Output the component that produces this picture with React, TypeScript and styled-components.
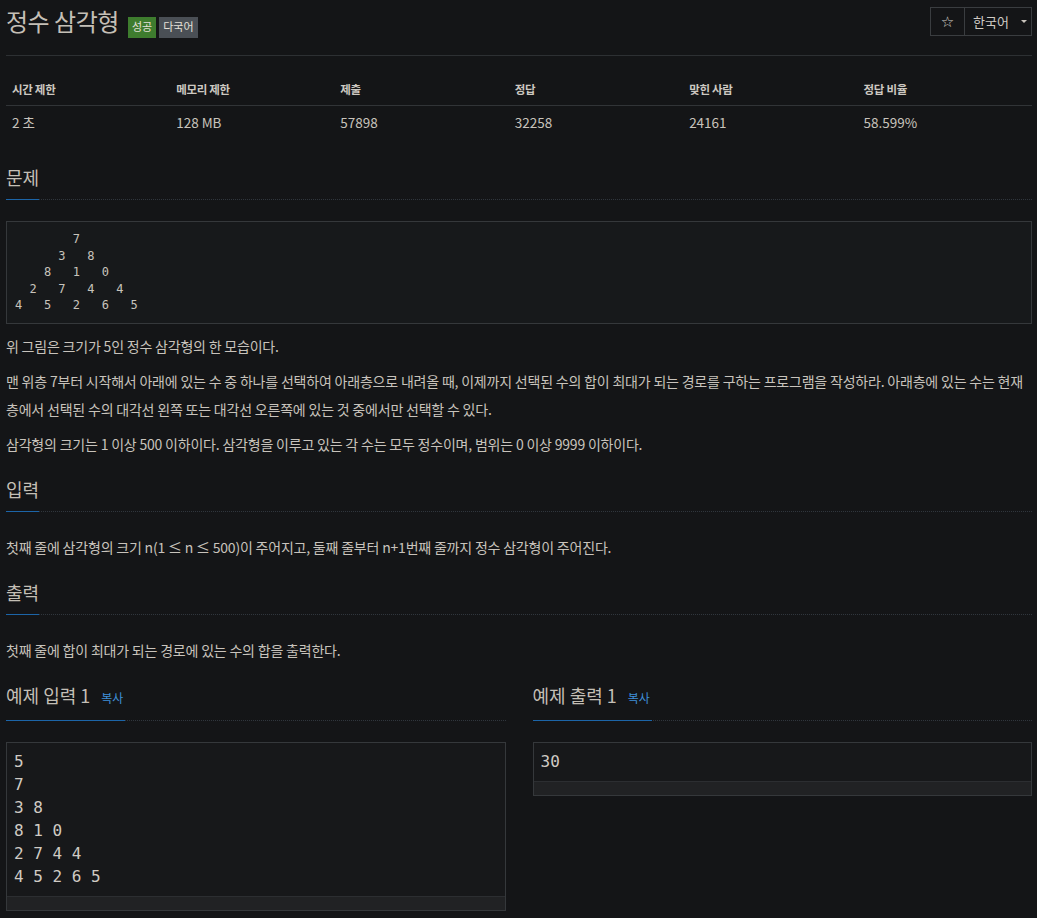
import React from "react";
import styled, { createGlobalStyle } from "styled-components";

const GlobalStyle = createGlobalStyle`
  html, body { margin: 0; padding: 0; background: #141517; }
  body {
    font-family: "Noto Sans CJK KR", "Noto Sans", sans-serif;
    color: #c8c3bc;
    word-break: keep-all;
  }
  * { box-sizing: border-box; }
`;

const Page = styled.div`
  padding: 0 5px 0 6px;
  min-height: 918px;
`;

const Header = styled.header`
  display: flex;
  justify-content: space-between;
  align-items: flex-start;
  height: 56px;
  border-bottom: 1px solid #2d3033;
`;

const TitleRow = styled.div`
  display: flex;
  align-items: baseline;
  margin-top: 6px;
`;

const Title = styled.h1`
  margin: 0 9px 0 0;
  font-size: 24px;
  font-weight: 400;
  line-height: 30px;
  letter-spacing: -0.02em;
  color: #c4bfb6;
`;

const Badge = styled.span<{ $tone: "success" | "muted" }>`
  display: inline-block;
  font-size: 11px;
  line-height: 19px;
  padding: 0 4px 2px;
  margin-right: 3px;
  color: #e4e0d9;
  background: ${(p) => (p.$tone === "success" ? "#3e7c2e" : "#4a4f55")};
`;

const ButtonGroup = styled.div`
  display: flex;
  height: 29px;
  margin-top: 7px;
  border: 1px solid #3a3d40;
`;

const StarButton = styled.div`
  width: 34px;
  display: flex;
  align-items: center;
  justify-content: center;
  border-right: 1px solid #3a3d40;
  font-family: "DejaVu Sans", sans-serif;
  font-size: 15px;
  color: #d6d2cb;
`;

const LangButton = styled.div`
  width: 66px;
  display: flex;
  align-items: center;
  padding-left: 8px;
  font-size: 13px;
  color: #d0cbc4;
`;

const Caret = styled.span`
  margin-left: 12px;
  width: 0;
  height: 0;
  border-top: 3px solid #c8c3bc;
  border-left: 3px solid transparent;
  border-right: 3px solid transparent;
`;

const InfoTable = styled.table`
  width: 100%;
  margin: 17px 0 28px;
  border-collapse: collapse;
  table-layout: fixed;
`;

const Th = styled.th`
  text-align: left;
  padding: 6px 6px;
  font-size: 11.5px;
  font-weight: 700;
  line-height: 20px;
  letter-spacing: -0.3px;
  color: #cdc8c1;
  border-bottom: 1px solid #313437;
`;

const Td = styled.td`
  padding: 6px 6px;
  font-size: 13.5px;
  line-height: 20px;
  color: #c8c3bc;
`;

const Section = styled.section`
  margin-bottom: 19.5px;
`;

const Headline = styled.div`
  display: flex;
  margin-bottom: 21px;
  border-bottom: 1px dotted #30363d;
`;

const H2 = styled.h2`
  margin: 0 0 -1px;
  padding-bottom: 11px;
  font-size: 18px;
  font-weight: 400;
  line-height: 22px;
  color: #c4bfb6;
  border-bottom: 1px solid #1c65a8;
`;

const CopyLink = styled.span`
  margin-left: 11px;
  padding-right: 2px;
  font-size: 12px;
  color: #3f8fd8;
`;

const FigurePre = styled.pre`
  margin: 0 0 8px;
  padding: 9px 8px;
  background: #17191b;
  border: 1px solid #35383b;
  font-family: "DejaVu Sans Mono", monospace;
  font-size: 12px;
  line-height: 16.6px;
  color: #c8c3bc;
`;

const Para = styled.p`
  margin: 0 0 6.6px;
  font-size: 14px;
  line-height: 28.4px;
  letter-spacing: -0.2px;
`;

const Samples = styled.div`
  display: grid;
  grid-template-columns: 1fr 1fr;
  column-gap: 27px;
`;

const SampleBox = styled.div`
  border: 1px solid #35383b;
  background: #17181a;
`;

const SamplePre = styled.pre`
  margin: 0;
  padding: 7px 7px 8px;
  font-family: "DejaVu Sans Mono", monospace;
  font-size: 16px;
  line-height: 23px;
  color: #d0cbc4;
`;

const ScrollTrack = styled.div`
  height: 14px;
  background: #212224;
  border-top: 1px solid #2c2e31;
`;

const stats = [
  { label: "시간 제한", value: "2 초", w: "16%" },
  { label: "메모리 제한", value: "128 MB", w: "16%" },
  { label: "제출", value: "57898", w: "17%" },
  { label: "정답", value: "32258", w: "17%" },
  { label: "맞힌 사람", value: "24161", w: "17%" },
  { label: "정답 비율", value: "58.599%", w: "17%" },
];

const triangle = `        7
      3   8
    8   1   0
  2   7   4   4
4   5   2   6   5`;

const sampleIn = `5
7
3 8
8 1 0
2 7 4 4
4 5 2 6 5`;

export default function App() {
  return (
    <>
      <GlobalStyle />
      <Page>
        <Header>
          <TitleRow>
            <Title>정수 삼각형</Title>
            <Badge $tone="success">성공</Badge>
            <Badge $tone="muted">다국어</Badge>
          </TitleRow>
          <ButtonGroup>
            <StarButton>☆</StarButton>
            <LangButton>
              한국어
              <Caret />
            </LangButton>
          </ButtonGroup>
        </Header>

        <InfoTable>
          <colgroup>
            {stats.map((s) => (
              <col key={s.label} style={{ width: s.w }} />
            ))}
          </colgroup>
          <thead>
            <tr>
              {stats.map((s) => (
                <Th key={s.label}>{s.label}</Th>
              ))}
            </tr>
          </thead>
          <tbody>
            <tr>
              {stats.map((s) => (
                <Td key={s.label}>{s.value}</Td>
              ))}
            </tr>
          </tbody>
        </InfoTable>

        <Section>
          <Headline>
            <H2>문제</H2>
          </Headline>
          <FigurePre>{triangle}</FigurePre>
          <Para>위 그림은 크기가 5인 정수 삼각형의 한 모습이다.</Para>
          <Para>
            맨 위층 7부터 시작해서 아래에 있는 수 중 하나를 선택하여 아래층으로 내려올 때, 이제까지 선택된 수의 합이
            최대가 되는 경로를 구하는 프로그램을 작성하라. 아래층에 있는 수는 현재 층에서 선택된 수의 대각선 왼쪽 또는
            대각선 오른쪽에 있는 것 중에서만 선택할 수 있다.
          </Para>
          <Para>
            삼각형의 크기는 1 이상 500 이하이다. 삼각형을 이루고 있는 각 수는 모두 정수이며, 범위는 0 이상 9999
            이하이다.
          </Para>
        </Section>

        <Section>
          <Headline>
            <H2>입력</H2>
          </Headline>
          <Para>
            첫째 줄에 삼각형의 크기 n(1 ≤ n ≤ 500)이 주어지고, 둘째 줄부터 n+1번째 줄까지 정수 삼각형이 주어진다.
          </Para>
        </Section>

        <Section>
          <Headline>
            <H2>출력</H2>
          </Headline>
          <Para>첫째 줄에 합이 최대가 되는 경로에 있는 수의 합을 출력한다.</Para>
        </Section>

        <Samples>
          <Section>
            <Headline>
              <H2>
                예제 입력 1<CopyLink>복사</CopyLink>
              </H2>
            </Headline>
            <SampleBox>
              <SamplePre>{sampleIn}</SamplePre>
              <ScrollTrack />
            </SampleBox>
          </Section>
          <Section>
            <Headline>
              <H2>
                예제 출력 1<CopyLink>복사</CopyLink>
              </H2>
            </Headline>
            <SampleBox>
              <SamplePre>30</SamplePre>
              <ScrollTrack />
            </SampleBox>
          </Section>
        </Samples>
      </Page>
    </>
  );
}
